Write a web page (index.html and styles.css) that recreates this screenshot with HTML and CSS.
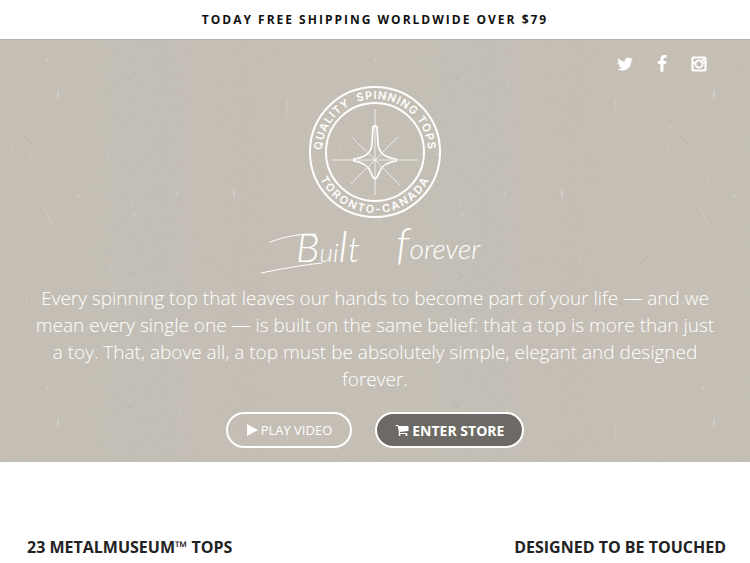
FILE: index.html
```html
<!DOCTYPE html>
<html lang="en">
<head>
    <meta charset="UTF-8">
    <meta name="viewport" content="width=device-width, initial-scale=1.0">
    <title>Quality Spinning Tops - Built Forever</title>
    <link rel="stylesheet" href="styles.css">
</head>
<body>
    <div class="promo-bar">Today free shipping worldwide over $79</div>

    <header class="hero">
        <!-- Paper texture -->
        <svg class="hero-texture" width="100%" height="100%" aria-hidden="true">
            <defs>
                <linearGradient id="stain">
                    <stop offset="0" stop-color="#c5bfb5"/>
                    <stop offset="0.5" stop-color="#c4bfb6"/>
                    <stop offset="0.75" stop-color="#c5beb5"/>
                    <stop offset="1" stop-color="#c5bfb5"/>
                </linearGradient>
                <filter id="grain" x="0" y="0" width="100%" height="100%">
                    <feTurbulence type="fractalNoise" baseFrequency="0.25 0.12" numOctaves="3" seed="4"/>
                    <feColorMatrix values="0 0 0 0 0.45  0 0 0 0 0.43  0 0 0 0 0.38  0.5 0 0 0 -0.19"/>
                </filter>
                <pattern id="paper" width="328" height="328" patternUnits="userSpaceOnUse">
                    <rect width="328" height="328" fill="url(#stain)"/>
                    <g fill="none" stroke="#cfcbc5" stroke-width="2" stroke-linecap="round">
                        <path d="M58 51v7M234 150v7M47 19v1M134 174v1M78 155v2M109 114v1"/>
                    </g>
                    <g fill="none" stroke="#d0ccc5" stroke-width="1">
                        <path d="M287 59v15M179 40v4M171 29v3M193 43l1 2M223 30l2 2M139 101l3-3M152 62v1M123 70v2M177 150v7M131 160v4M44 168l8 16M180 173l2 2M178 213v4M30 114v3M12 106v3M51 137l2 2M110 224v3M208 185v3M245 108v3M120 172v3M215 75v2M252 218v3M27 260v4M150 277v4M274 290v3M270 255l2 5M72 305v3"/>
                    </g>
                    <g fill="none" stroke="#b7b2a8" stroke-width="1">
                        <path d="M24 97l9 7M12 79l4 4M126 39h5M130 133l2 3M129 232l6 5M184 144h1M116 45l3 2M314 222l7-7M292 262l3 4M150 258h2"/>
                    </g>
                </pattern>
            </defs>
            <rect width="100%" height="100%" fill="url(#paper)"/>
            <rect width="100%" height="100%" filter="url(#grain)" opacity="0.3"/>
        </svg>

        <nav class="social" aria-label="Social">
            <a href="#" aria-label="Twitter">
                <svg viewBox="0 0 1792 1792" fill="currentColor"><path d="M1684 408q-67 98-162 167 1 14 1 42 0 130-38 259.500t-115.500 248.500-184.500 210.500-258 146-323 54.500q-271 0-496-145 35 4 78 4 225 0 401-138-105-2-188-64.500t-114-159.500q33 5 61 5 43 0 85-11-112-23-185.500-111.500t-73.500-205.500v-4q68 38 146 41-66-44-105-115t-39-154q0-88 44-163 121 149 294.500 238.500t371.500 99.500q-8-38-8-74 0-134 94.500-228.500t228.500-94.500q140 0 236 102 109-21 205-78-37 115-142 178 93-10 186-50z"/></svg>
            </a>
            <a href="#" aria-label="Facebook">
                <svg viewBox="0 0 1792 1792" fill="currentColor"><path d="M1343 12v264h-157q-86 0-116 36t-30 108v189h293l-39 296h-254v759h-306v-759h-255v-296h255v-218q0-186 104-288.500t277-102.500q147 0 228 12z"/></svg>
            </a>
            <a href="#" aria-label="Instagram">
                <svg viewBox="0 0 18 18" fill="none" stroke="currentColor">
                    <rect x="2.500" y="2.500" width="13" height="13" rx="1.200" stroke-width="2.200"/>
                    <path d="M3 7.700h3M12 7.700h3" stroke-width="1.600"/>
                    <circle cx="9" cy="9" r="3.600" stroke-width="2"/>
                    <path d="M12 5h2.500" stroke-width="2"/>
                </svg>
            </a>
        </nav>

        <svg class="badge" viewBox="0 0 134 134" role="img" aria-label="Quality spinning tops, Toronto-Canada">
            <defs>
                <path id="arcTop" d="M14 67a53 53 0 0 1 106 0"/>
                <path id="arcBottom" d="M6 67a61 61 0 0 0 122 0"/>
            </defs>
            <g fill="none" stroke="#fff">
                <circle cx="67" cy="67" r="65" stroke-width="2"/>
                <circle cx="67" cy="67" r="49" stroke-width="2"/>
                <path d="M67 24v86M24 75h86M44 52l48 48M90 52L43 99" stroke-width="1" opacity="0.7"/>
                <path d="M65 42q2-2 4 0l1 17q1 13 18 15v2q-14 2-17 12-1 4-4 6-3-2-4-6-3-10-17-12v-2q17-2 18-15z" stroke-width="1.700"/>
            </g>
            <g class="badge-text">
                <text><textPath href="#arcTop" startOffset="50%">QUALITY &#160;SPINNING TOPS</textPath></text>
                <text class="wide"><textPath href="#arcBottom" startOffset="50%">TORONTO-CANADA</textPath></text>
            </g>
        </svg>

        <svg class="signature" viewBox="0 0 230 50" role="img" aria-label="Built forever">
            <g fill="none" stroke="#fff" stroke-linecap="round">
                <path d="M10 17Q34 8 56 9"/>
                <path d="M1 48Q40 40 62 38"/>
            </g>
            <text x="36" y="37"><tspan font-size="40">B</tspan><tspan font-size="26">ui</tspan><tspan font-size="44">l</tspan><tspan font-size="36">t</tspan></text>
            <text x="136" y="34"><tspan font-size="44">f</tspan><tspan font-size="28">orever</tspan></text>
        </svg>

        <p class="tagline">Every spinning top that leaves our hands to become part of your life — and we mean every single one — is built on the same belief: that a top is more than just a toy. That, above all, a top must be absolutely simple, elegant and designed forever.</p>

        <div class="actions">
            <button type="button" class="btn btn-play">
                <svg viewBox="0 0 12 14" fill="currentColor"><path d="M1 1l11 6-11 6z"/></svg>
                PLAY VIDEO
            </button>
            <a href="#" class="btn btn-store">
                <svg viewBox="0 0 1792 1792" fill="currentColor"><path d="M704 1536q0 52-38 90t-90 38-90-38-38-90 38-90 90-38 90 38 38 90zm896 0q0 52-38 90t-90 38-90-38-38-90 38-90 90-38 90 38 38 90zm128-1088v512q0 24-16.500 42.500t-40.500 21.500l-1044 122q13 60 13 70 0 16-24 64h920q26 0 45 19t19 45-19 45-45 19h-1024q-26 0-45-19t-19-45q0-11 8-31.500t16-36 21.500-40 15.500-29.500l-177-823h-204q-26 0-45-19t-19-45 19-45 45-19h256q16 0 28.500 6.500t19.500 15.500 13 24.500 8 26 5.500 29.500 4.500 26h1201q26 0 45 19t19 45z"/></svg>
                ENTER STORE
            </a>
        </div>
    </header>

    <main class="intro">
        <h2>23 METALMUSEUM™ TOPS</h2>
        <h2>DESIGNED TO BE TOUCHED</h2>
    </main>
</body>
</html>
```
FILE: styles.css
```css
* {
    margin: 0;
    padding: 0;
    box-sizing: border-box;
}

body {
    font-family: "Open Sans", "Noto Sans", sans-serif;
    color: #222;
    background: #fff;
}

.promo-bar {
    padding: 0 16px;
    font-size: 12px;
    font-weight: 700;
    line-height: 39px;
    letter-spacing: 2px;
    text-align: center;
    text-transform: uppercase;
    color: #111;
}

/* Hero */
.hero {
    position: relative;
    display: flex;
    flex-direction: column;
    align-items: center;
    padding: 13px 32px 14px;
    color: #fff;
    background: #c4beb4;
    border-top: 1px solid #b9b4ab;
}

.hero-texture {
    position: absolute;
    top: 0;
    left: 0;
    z-index: 0;
}

.hero > *:not(.hero-texture) {
    position: relative;
    z-index: 1;
}

.social {
    display: flex;
    align-self: flex-end;
    gap: 19px;
    padding: 2px 10px;
}

.social a {
    display: flex;
    width: 18px;
    height: 18px;
    color: #fff;
}

.social svg {
    width: 18px;
    height: 18px;
}

.badge {
    width: 134px;
    height: 134px;
    margin-top: 10px;
}

.badge-text {
    font-family: Inter, sans-serif;
    font-size: 11px;
    font-weight: 600;
    letter-spacing: 1px;
    text-anchor: middle;
    fill: #fff;
}

.badge-text .wide {
    letter-spacing: 2px;
}

.signature {
    width: 230px;
    height: 50px;
    margin-top: 6px;
    overflow: visible;
}

.signature text {
    font-family: Lato, sans-serif;
    font-style: italic;
    font-weight: 300;
    fill: #fff;
}

.tagline {
    margin-top: 10px;
    font-size: 19px;
    font-weight: 300;
    line-height: 27px;
    text-align: center;
}

.actions {
    display: flex;
    gap: 23px;
    margin-top: 19px;
}

.btn {
    display: flex;
    align-items: center;
    gap: 3px;
    height: 36px;
    padding: 0 18px;
    border: 2px solid #fff;
    border-radius: 18px;
    background: transparent;
    color: #fff;
    font-family: inherit;
    font-size: 14px;
    text-decoration: none;
    cursor: pointer;
}

.btn svg {
    width: 12px;
    height: 14px;
}

.btn-play {
    font-size: 13px;
}

.btn-store {
    background: #6d6a65;
    font-weight: 700;
}

.btn-store svg {
    width: 14px;
}

/* Section headings */
.intro {
    display: flex;
    justify-content: space-between;
    padding: 72px 24px 0 27px;
}

.intro h2 {
    font-size: 16px;
    font-weight: 700;
    line-height: 26px;
}
```
